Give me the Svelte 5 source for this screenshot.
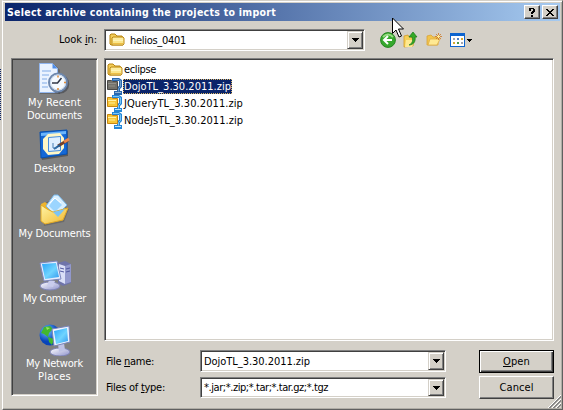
<script>
  const places = [
    { icon: 'recent', lines: ['My Recent', 'Documents'], h: 69, top: 3 },
    { icon: 'desktop', lines: ['Desktop'], h: 65, top: 0 },
    { icon: 'docs', lines: ['My Documents'], h: 65, top: 0 },
    { icon: 'computer', lines: ['My Computer'], h: 65, top: 0 },
    { icon: 'network', lines: ['My Network', 'Places'], h: 65, top: 0 }
  ];
  const widths = { 'My Recent': 53, Documents: 55, Desktop: 41, 'My Documents': 72, 'My Computer': 63, 'My Network': 57, Places: 33 };
  const files = [
    { name: 'eclipse', folder: true, w: 32 },
    { name: 'DojoTL_3.30.2011.zip', selected: true, w: 107 },
    { name: 'JQueryTL_3.30.2011.zip', w: 119 },
    { name: 'NodeJsTL_3.30.2011.zip', w: 119 }
  ];
  function fit(node, width) {
    const n = node.textContent.length;
    const natural = node.getBoundingClientRect().width;
    node.style.letterSpacing = (width - natural) / n + 'px';
  }
</script>

{#snippet folder()}
  <svg width="16" height="16" viewBox="0 0 16 16">
    <path d="M1 12V3l1-1h4l2 2h5l1 2v7H2z" fill="#f3cd57" stroke="#b98512" />
    <path d="M3 13V6l1-1h10l1 1v6l-1 1z" fill="#fbe68b" stroke="#bd8a18" />
    <path d="M4 7h10M4 8.5h10" stroke="#fff5b8" />
    <path d="M4 11.5h10" stroke="#eebf45" />
  </svg>
{/snippet}

{#snippet zip(sel)}
  <svg width="16" height="17" viewBox="0 0 16 17">
    <path d="M5 0h7l3 2v7l-2 2v2h2v4H7v-4h3V9l2-1V3H5z" fill={sel ? '#2a68ae' : '#2385d6'} />
    <path d="M6 1.500h6l1.500 1.500v5.500l-2 2v3" fill="none" stroke={sel ? '#6da0cf' : '#7cc6f6'} />
    <path d="M8 14.500h6" stroke={sel ? '#8fb4d8' : '#b4e0fa'} />
    <path d="M.5 2.500h4l1 1h5v8H.5z" fill={sel ? '#73716a' : '#f6c638'} stroke={sel ? '#4b4a48' : '#c98710'} />
    <path d="M1 5.500h8" stroke={sel ? '#918f88' : '#fff0a4'} />
    <path d="M2 8h6" stroke={sel ? '#828078' : '#fadb68'} stroke-width="2" />
  </svg>
{/snippet}

{#snippet arrow()}
  <span class="drop"><svg width="7" height="4" viewBox="0 0 7 4" shape-rendering="crispEdges"><path d="M0 0h7v1H6v1H5v1H4v1H3V3H2V2H1V1H0z" /></svg></span>
{/snippet}

{#snippet placeIcon(kind)}
  <svg width="34" height="32" viewBox="0 0 34 32">
    <defs>
      <linearGradient id="scr" x2="1" y2="1"><stop stop-color="#2aa5fa" /><stop offset=".55" stop-color="#70d4ff" /><stop offset="1" stop-color="#3499ee" /></linearGradient>
      <linearGradient id="base" x2="1" y2="1"><stop stop-color="#fff" /><stop offset="1" stop-color="#8d91cc" /></linearGradient>
      <linearGradient id="gold" x2="1" y2="1"><stop stop-color="#fff4a6" /><stop offset="1" stop-color="#f1b92e" /></linearGradient>
      <radialGradient id="globe" cx=".35" cy=".3"><stop stop-color="#77c6ff" /><stop offset="1" stop-color="#0744ba" /></radialGradient>
    </defs>
    {#if kind === 'recent'}
      <path d="M2 2h15l5 5v24H2z" fill="#444" opacity=".4" />
      <path d="M1.500.5h13l5 5v24h-18z" fill="#eaf3ff" stroke="#91b6ef" />
      <path d="M14.500.5v5h5z" fill="#4f8de8" />
      <path d="M4 8h9M4 12h7M4 16h5M4 20h5M4 24h6" stroke="#a4c4ef" stroke-width="1.5" />
      <circle cx="21.500" cy="21" r="9.800" fill="#30343e" opacity=".5" />
      <circle cx="20" cy="19.500" r="9" fill="#f5faff" stroke="#6d87ad" stroke-width="2" />
      <circle cx="20" cy="19.500" r="7.500" fill="none" stroke="#c4d5ea" />
      <path d="M19.500 20l4-5M14 20h6" stroke="#303747" stroke-width="1.500" />
      <path d="M20 12.500v2M26 19.500h2M20 25v2" stroke="#e08a36" stroke-width="1.500" />
    {:else if kind === 'desktop'}
      <path d="M3 4l27-2v25L4 31z" fill="#333" opacity=".5" />
      <path d="M2 3l27-2v24L3 29z" fill="#1468d7" stroke="#0750ae" />
      <path d="M3 4l25-2v3L3 7z" fill="#6bb5fb" />
      <path d="M10 5l12-1 4 5v10l-5 6-11 1-5-6V10z" fill="#fff7c6" />
      <path d="M10.500 8.500l12-1v14l-12 1z" fill="#dff0ff" stroke="#468cdd" />
      <path d="M30 11L20 17" stroke="#774027" stroke-width="3" />
      <path d="M31 10l-5 3" stroke="#e8874d" stroke-width="3" />
      <path d="M22 16l-6 4" stroke="#1f5f9a" stroke-width="2" />
      <path d="M15 14v5h4" fill="none" stroke="#4a80b5" />
    {:else if kind === 'docs'}
      <path d="M4 10l7-3 20 8-5 13-20 4z" fill="#444" opacity=".35" />
      <path d="M3 10l4-2 4 3h16v10L9 30l-6-3z" fill="#edb42e" />
      <path d="M16 1h4l9 10-11 11-10-10z" fill="#d8efff" stroke="#76b7ec" />
      <path d="M17 4l7 7-7 7-6-6z" fill="#9bd5ff" />
      <path d="M12 9l5-5 6 5" fill="none" stroke="#fff" />
      <path d="M3 11l6 4 6 3 15-4-5 12-18 4-4-3z" fill="url(#gold)" stroke="#e2aa25" />
      <path d="M15 18l12-3-7 8z" fill="#7cc4f4" />
    {:else if kind === 'computer'}
      <path d="M20 4l7-2 6 3v19l-8 3-5-3z" fill="#6f74aa" />
      <path d="M21 5l6 2v18l-6-3z" fill="#dadff7" />
      <path d="M27 7l6-2v18l-6 2z" fill="#9298cc" />
      <path d="M22 9l4 1M22 12l4 1M28 10l4-1M28 13l4-1" stroke="#5158a0" />
      <ellipse cx="12" cy="27" rx="10" ry="4" fill="url(#base)" stroke="#7f84b7" />
      <path d="M11 21l6 1-2 6-6-1z" fill="#c9ccec" />
      <path d="M2 4l17-2 4 18-17 2z" fill="#e6edff" stroke="#7d86bd" />
      <path d="M4 5l14-1 3 14-14 2z" fill="url(#scr)" />
    {:else}
      <circle cx="12" cy="11" r="10.500" fill="url(#globe)" />
      <path d="M6 3l6-1 3 3-4 4-1 4-4-3-3-1zM10 13l6 2-2 6-3-3z" fill="#43b72e" />
      <path d="M8 3l4 1-3 2z" fill="#9be85c" />
      <ellipse cx="22" cy="28" rx="10" ry="4" fill="url(#base)" stroke="#7f84b7" />
      <path d="M20 20l6-1 1 7-6 2z" fill="#bec2e5" />
      <path d="M14 5l17-3 1 16-16 4z" fill="#edf3ff" stroke="#7883b8" />
      <path d="M16 7l13-3 1 13-12 3z" fill="url(#scr)" />
    {/if}
  </svg>
{/snippet}

<div class="screen">
  <div class="behind"></div>
  <div class="dialog">
    <header>
      <h1><span use:fit={269}>Select archive containing the projects to import</span></h1>
      <span class="tbtn"><svg width="8" height="9" viewBox="0 0 8 9" shape-rendering="crispEdges"><path d="M1 0h5v1h1v3H6v1H5v1H3V4h1V3h1V1H3v2H1zM3 7h2v2H3z" /></svg></span>
      <span class="tbtn last"><svg width="8" height="7" viewBox="0 0 8 7" shape-rendering="crispEdges"><path d="M0 0h2v1h1v1h2V1h1V0h2v1H7v1H6v1H5v1h1v1h1v1h1v1H6V6H5V5H3v1H2v1H0V6h1V5h1V4h1V3H2V2H1V1H0z" /></svg></span>
    </header>

    <div class="look">
      <label><span use:fit={38}>Look <u>i</u>n:</span></label>
      <div class="combo lookbox">
        {@render folder()}<b><span use:fit={56}>helios_0401</span></b>{@render arrow()}
      </div>
      <div class="tools">
        <svg width="16" height="16" viewBox="0 0 16 16">
          <circle cx="8" cy="8" r="7.4" fill="#36a82d" stroke="#258522" />
          <path d="M3 5Q8 0 13 5" stroke="#98dc83" fill="none" stroke-width="2" />
          <path d="M8 4L4 8l4 4M4 8h8" fill="none" stroke="#fff" stroke-width="2" />
        </svg>
        <svg width="16" height="16" viewBox="0 0 16 16">
          <path d="M1 4l4-1 1 2h6l-2 9-9 1z" fill="#f6cf55" stroke="#d49a27" stroke-width=".8" />
          <path d="M3 8h9l-3 7H2z" fill="#ffe991" />
          <path d="M6 13c4-2 4-5 3-8H6l4-5 4 5h-2c1 5-2 8-6 8z" fill="#35a927" stroke="#187918" stroke-width=".7" />
        </svg>
        <svg width="16" height="16" viewBox="0 0 16 16">
          <path d="M1 13V4l4-1 2 2h5v8z" fill="#f1c44d" stroke="#d9a336" stroke-width=".8" />
          <path d="M2 13l2-6h10l-3 6z" fill="#ffe993" stroke="#dfaf48" stroke-width=".8" />
          <path d="M12.500 1v7M9 4.500h7M10 2l5 5M15 2l-5 5" stroke="#cc7625" stroke-width=".8" />
          <path d="M12.500 3v3M11 4.500h3" stroke="#fff19b" />
        </svg>
        <svg class="view" width="23" height="16" viewBox="0 0 23 16" shape-rendering="crispEdges">
          <path d="M0 1h15v14H0z" fill="#0d64cf" /><path d="M1 4h13v10H1z" fill="#fff" />
          <path d="M3 6h2v2H3zM11 10h2v2h-2z" fill="#a2a5b0" /><path d="M7 6h2v2H7z" fill="#4f7fc7" />
          <path d="M11 6h2v2h-2zM3 10h2v2H3z" fill="#d7a931" /><path d="M7 10h2v2H7z" fill="#4a9845" />
          <path d="M17 7h5v1h-1v1h-1v1h-1V9h-1V8h-1z" />
        </svg>
      </div>
    </div>

    <div class="main">
      <nav>
        {#each places as p}
          <div class="place" style="height:{p.h}px;padding-top:{p.top}px">
            {@render placeIcon(p.icon)}
            {#each p.lines as line}<div class="pl"><span use:fit={widths[line]}>{line}</span></div>{/each}
          </div>
        {/each}
      </nav>
      <div class="right">
        <div class="list">
          {#each files as f}
            <div class="file">
              {#if f.folder}{@render folder()}{:else}{@render zip(f.selected)}{/if}
              <div class="name" class:selected={f.selected}><span use:fit={f.w}>{f.name}</span></div>
            </div>
          {/each}
        </div>
        <div class="bottom">
          <div class="labels">
            <label><span use:fit={48}>File <u>n</u>ame:</span></label>
            <label><span use:fit={59}>Files of <u>t</u>ype:</span></label>
          </div>
          <div class="fields">
            <div class="combo"><b><span use:fit={106}>DojoTL_3.30.2011.zip</span></b>{@render arrow()}</div>
            <div class="combo second"><b><span use:fit={124}>*.jar;*.zip;*.tar;*.tar.gz;*.tgz</span></b>{@render arrow()}</div>
          </div>
          <div class="buttons">
            <button class="default"><span use:fit={27}><u>O</u>pen</span></button>
            <button><span use:fit={34}>Cancel</span></button>
          </div>
        </div>
      </div>
    </div>
    <svg class="grip" width="13" height="13" viewBox="0 0 13 13">
      <path d="M0 13L13 0M4 13l9-9M8 13l5-5" stroke="#fff" />
      <path d="M1 13L13 1M2 13L13 2M5 13l8-8M6 13l7-7M9 13l4-4M10 13l3-3" stroke="#808080" stroke-width=".9" />
    </svg>
  </div>
  <svg class="cursor" width="13" height="22" viewBox="0 0 13 22">
    <path d="M.5 1v15.500l3.500-3.500 3 7 2.500-1-3-7h5z" fill="#fff" stroke="#000" />
  </svg>
</div>

<style>
  .screen { position: relative; width: 563px; height: 410px; display: flex; overflow: hidden; background: #d4d0c8; color: #000; font: 11px/13px "DejaVu Sans Condensed", "DejaVu Sans", sans-serif; }
  .screen * { box-sizing: border-box; }
  svg { display: block; flex: none; }
  span { white-space: pre; }
  u { text-underline-offset: 1px; text-decoration-thickness: 1px; }
  .behind { width: 1px; height: 51px; margin: 69px 1px 0 0; background: repeating-linear-gradient(#0a246a 0 1px, #d4d0c8 1px 2px); }
  .dialog { width: 561px; height: 410px; padding: 1px 1px 0 2px; border: solid; border-width: 1px; border-color: #d4d0c8 #606060 #606060 #fff; box-shadow: inset 0 1px #fff, inset -1px -1px #b0ada6; display: flex; flex-direction: column; }
  header { height: 18px; margin-top: 1px; margin-right: 1px; display: flex; align-items: flex-start; background: linear-gradient(90deg, #0a246a, #a6caf0); }
  h1 { flex: 1; margin: 3px 0 0 2px; color: #fff; font: bold 10.5px/13px "DejaVu Sans Condensed", sans-serif; }
  .tbtn { width: 16px; height: 14px; margin-top: 2px; display: flex; align-items: center; justify-content: center; background: #d4d0c8; border: 1px solid; border-color: #fff #404040 #404040 #fff; box-shadow: inset -1px -1px #808080; }
  .tbtn.last { margin: 2px 2px 0 2px; }
  .look { height: 37px; display: flex; align-items: flex-start; padding-top: 8px; }
  .look label { width: 99px; padding: 4px 0 0 54px; }
  .combo { display: flex; align-items: center; height: 22px; width: 246px; background: #fff; border: 1px solid; border-color: #808080 #fff #fff #808080; box-shadow: inset 1px 1px #404040, inset -1px -1px #d4d0c8; padding: 1px; }
  .combo b { flex: 1; padding-left: 2px; font-weight: normal; }
  .lookbox { width: 261px; padding-left: 4px; }
  .lookbox b { padding-left: 5px; }
  .drop { width: 16px; height: 18px; display: flex; align-items: center; justify-content: center; background: #d4d0c8; border: 1px solid; border-color: #d4d0c8 #404040 #404040 #d4d0c8; box-shadow: inset 1px 1px #fff, inset -1px -1px #808080; }
  .second .drop { height: 17px; }
  .tools { display: flex; gap: 7px; margin: 3px 0 0 15px; }
  .view { margin-left: 1px; }
  .main { display: flex; padding-left: 6px; }
  nav { width: 87px; height: 338px; padding: 1px; background: #808080; border: 1px solid; border-color: #808080 #fff #fff #808080; box-shadow: inset 1px 1px #404040, inset -1px -1px #d4d0c8; }
  .place { display: flex; flex-direction: column; align-items: center; color: #fff; }
  .place svg { margin-bottom: 1px; }
  .pl { line-height: 13px; }
  .right { margin-left: 6px; width: 450px; }
  .list { height: 283px; padding: 2px; background: #fff; border: 1px solid; border-color: #808080 #fff #fff #808080; box-shadow: inset 1px 1px #404040, inset -1px -1px #d4d0c8; }
  .file { height: 17px; display: flex; align-items: center; }
  .name { height: 15px; padding: 1px 1px 0 1px; line-height: 13px; }
  .selected { background: #0a246a; color: #fff; outline: 1px dotted #d9b665; outline-offset: -1px; }
  .bottom { display: flex; margin-top: 9px; }
  .labels { width: 96px; padding: 5px 0 0 2px; }
  .labels label { display: block; height: 26px; }
  .second { height: 21px; margin-top: 5px; }
  .buttons { margin-left: 33px; width: 75px; display: flex; flex-direction: column; gap: 3px; }
  button { height: 23px; padding: 0; font: inherit; color: #000; background: #d4d0c8; border: 1px solid; border-color: #fff #404040 #404040 #fff; box-shadow: inset -1px -1px #808080; border-radius: 0; }
  .default { border-color: #000; box-shadow: inset 1px 1px #fff, inset -1px -1px #404040, inset -2px -2px #808080; }
  .grip { position: absolute; right: 2px; bottom: 2px; }
  .cursor { position: absolute; left: 392px; top: 17px; }
</style>
